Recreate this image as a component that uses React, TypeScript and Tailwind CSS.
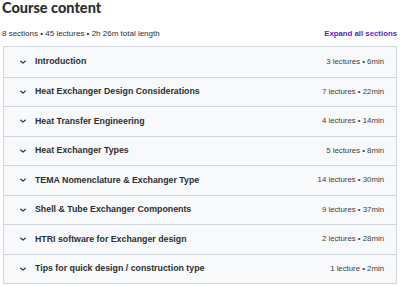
const sections = [
  { title: 'Introduction', meta: '3 lectures • 6min' },
  { title: 'Heat Exchanger Design Considerations', meta: '7 lectures • 22min' },
  { title: 'Heat Transfer Engineering', meta: '4 lectures • 14min' },
  { title: 'Heat Exchanger Types', meta: '5 lectures • 8min' },
  { title: 'TEMA Nomenclature & Exchanger Type', meta: '14 lectures • 30min' },
  { title: 'Shell & Tube Exchanger Components', meta: '9 lectures • 37min' },
  { title: 'HTRI software for Exchanger design', meta: '2 lectures • 28min' },
  { title: 'Tips for quick design / construction type', meta: '1 lecture • 2min' },
]

function Chevron() {
  return (
    <svg width="8" height="8" viewBox="0 0 8 8" className="text-[#2d2f31]">
      <path d="M1.6 3 L4 5.2 L6.4 3" fill="none" stroke="currentColor" strokeWidth="1.1" strokeLinecap="round" strokeLinejoin="round" />
    </svg>
  )
}

export default function App() {
  return (
    <div className="h-[286px] w-[400px] overflow-hidden bg-white px-[3px] font-['Liberation_Sans',sans-serif] text-[#2d2f31]">
      <h2 className="-ml-[1px] font-['Lato',sans-serif] text-[14.5px] font-black leading-[16px]">Course content</h2>

      <div className="mt-[13px] flex items-center justify-between">
        <span className="-ml-[1px] text-[8px] leading-[10px] text-[#2d2f31]">
          8 sections • 45 lectures • 2h 26m total length
        </span>
        <button className="text-[7.8px] font-bold leading-[10px] text-[#5624d0]">Expand all sections</button>
      </div>

      <div className="mt-[7px] border border-[#d1d7dc]">
        {sections.map((s, i) => (
          <div
            key={s.title}
            className={`flex h-[29.5px] items-center justify-between bg-[#f7f9fa] pl-[15px] pr-[12px] ${i > 0 ? 'border-t border-[#d1d7dc]' : ''}`}
          >
            <div className="flex items-center gap-[8px]">
              <Chevron />
              <span className="text-[8.8px] font-bold">{s.title}</span>
            </div>
            <span className="text-[7.8px] text-[#3e4143]">{s.meta}</span>
          </div>
        ))}
      </div>
    </div>
  )
}
